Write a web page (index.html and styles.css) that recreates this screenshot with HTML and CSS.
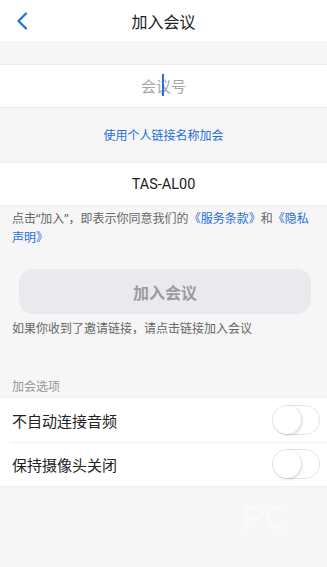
FILE: index.html
```html
<!DOCTYPE html>
<html lang="zh-CN">
<head>
<meta charset="utf-8">
<title>加入会议</title>
<link rel="stylesheet" href="styles.css">
</head>
<body>
<div class="page">
  <header class="topbar">
    <span class="back">
      <svg width="12" height="18" viewBox="0 0 12 18"><path d="M10 1.5 L2.5 9 L10 16.5" fill="none" stroke="#1f6fd8" stroke-width="2.2" stroke-linecap="round" stroke-linejoin="round"/></svg>
    </span>
    <h1 class="title">加入会议</h1>
  </header>

  <div class="gap"></div>

  <div class="input-row">
    <span class="placeholder">会<span class="cursor-wrap">议<span class="cursor"></span></span>号</span>
  </div>

  <div class="link-row">使用个人链接名称加会</div>

  <div class="name-row">TAS-AL00</div>

  <p class="terms">点击“加入”，即表示你同意我们的<span class="link">《服务条款》</span>和<span class="link">《隐私声明》</span></p>

  <div class="btn-wrap">
    <button class="join-btn">加入会议</button>
  </div>

  <p class="hint">如果你收到了邀请链接，请点击链接加入会议</p>

  <p class="section-label">加会选项</p>

  <ul class="options">
    <li class="option">
      <span>不自动连接音频</span>
      <span class="toggle"><span class="knob"></span></span>
    </li>
    <li class="option">
      <span>保持摄像头关闭</span>
      <span class="toggle"><span class="knob"></span></span>
    </li>
  </ul>

  <div class="watermark">PC</div>
</div>
</body>
</html>
```
FILE: styles.css
```css
* { box-sizing: border-box; }
html, body {
  margin: 0;
  padding: 0;
  background: #f6f6f7;
  font-family: "Noto Sans CJK SC", "Noto Sans", sans-serif;
}
.page {
  position: relative;
  width: 327px;
  height: 567px;
  overflow: hidden;
  background: #f6f6f7;
  display: flex;
  flex-direction: column;
}
.topbar {
  height: 41px;
  background: #fff;
  display: flex;
  align-items: center;
  justify-content: center;
  position: relative;
}
.back {
  position: absolute;
  left: 16px;
  top: 12px;
  width: 12px;
  height: 18px;
  display: flex;
}
.title {
  margin: 0;
  font-size: 16px;
  font-weight: 400;
  color: #222;
  line-height: 20px;
}
.gap { height: 23px; }
.input-row {
  height: 44px;
  background: #fff;
  border-top: 1px solid #ebebeb;
  border-bottom: 1px solid #ebebeb;
  display: flex;
  align-items: center;
  justify-content: center;
}
.placeholder {
  font-size: 15px;
  color: #a6a6a6;
  line-height: 20px;
}
.cursor-wrap { position: relative; }
.cursor {
  position: absolute;
  left: 6px;
  top: -1px;
  width: 2px;
  height: 22px;
  background: #2a70d8;
}
.link-row {
  height: 54px;
  display: flex;
  align-items: center;
  justify-content: center;
  font-size: 12px;
  color: #1f6fd8;
  line-height: 16px;
}
.name-row {
  height: 44px;
  background: #fff;
  border-top: 1px solid #efefef;
  border-bottom: 1px solid #efefef;
  display: flex;
  align-items: center;
  justify-content: center;
  font-family: Roboto, "Liberation Sans", sans-serif;
  font-size: 14.5px;
  color: #222;
}
.terms {
  margin: 3px 0 0;
  padding: 0 10px 0 12px;
  font-family: "Noto Sans", "Noto Sans CJK SC", sans-serif;
  font-size: 12px;
  line-height: 19px;
  color: #666;
}
.link { color: #1f6fd8; }
.btn-wrap {
  padding: 22px 16px 0 19px;
}
.join-btn {
  width: 100%;
  height: 45px;
  border: none;
  border-radius: 14px;
  background: #e9e9ee;
  font-family: "Noto Sans CJK SC", sans-serif;
  font-size: 16px;
  font-weight: 700;
  color: #9b9b9f;
  padding: 0;
}
.hint {
  margin: 5px 0 0;
  padding: 0 12px;
  font-size: 12px;
  line-height: 18px;
  color: #666;
}
.section-label {
  margin: 40px 0 0;
  padding: 0 12px 2px;
  font-size: 12px;
  line-height: 18px;
  color: #999;
}
.options {
  list-style: none;
  margin: 0;
  padding: 0;
  background: #fff;
  border-top: 1px solid #efefef;
  border-bottom: 1px solid #efefef;
}
.option {
  height: 44px;
  display: flex;
  align-items: center;
  justify-content: space-between;
  padding: 0 7px 0 12px;
  font-size: 15px;
  color: #222;
  position: relative;
}
.option + .option::before {
  content: "";
  position: absolute;
  left: 10px;
  right: 0;
  top: 0;
  height: 1px;
  background: #eeeeee;
}
.toggle {
  width: 48px;
  height: 30px;
  border-radius: 15px;
  border: 1px solid #e2e2e2;
  background: #fff;
  display: flex;
  align-items: center;
}
.knob {
  width: 28px;
  height: 28px;
  border-radius: 50%;
  background: #fff;
  box-shadow: 1px 1px 3px rgba(0,0,0,0.18);
}
.watermark {
  position: absolute;
  left: 222px;
  top: 489px;
  width: 88px;
  height: 56px;
  border-radius: 6px;
  background: rgba(255,255,255,0.15);
  color: rgba(255,255,255,0.45);
  font-family: "Liberation Sans", sans-serif;
  font-size: 34px;
  line-height: 56px;
  text-align: center;
}
```
